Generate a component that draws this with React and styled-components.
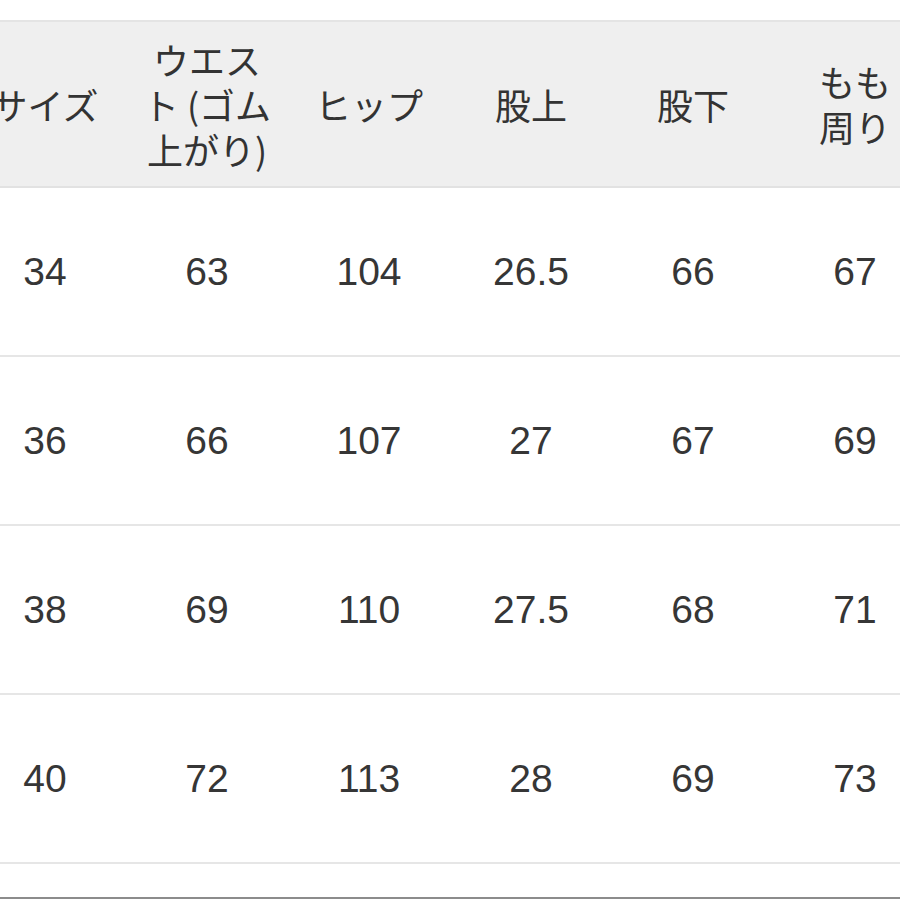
import styled, { createGlobalStyle } from "styled-components";

const GlobalStyle = createGlobalStyle`
  html, body {
    margin: 0;
    padding: 0;
    background: #ffffff;
    overflow: hidden;
  }
`;

const Page = styled.div`
  width: 900px;
  height: 900px;
  overflow: hidden;
  padding-top: 20px;
  box-sizing: border-box;
`;

const Table = styled.table`
  width: 972px;
  margin-left: -36px;
  border-collapse: collapse;
  table-layout: fixed;
  border-top: 2px solid #e4e4e4;
`;

const HeadRow = styled.tr`
  background: #efefef;
  height: 166px;
  border-bottom: 2px solid #e2e2e2;
`;

const HeadCell = styled.th`
  font-family: "Noto Sans CJK JP", "Liberation Sans", sans-serif;
  font-size: 36px;
  font-weight: 400;
  line-height: 45px;
  color: #333333;
  text-align: center;
  vertical-align: middle;
  padding: 0;
  white-space: nowrap;
`;

const BodyRow = styled.tr`
  height: 169px;
  border-bottom: 2px solid #e6e6e6;
`;

const Cell = styled.td`
  font-family: "Liberation Sans", Arial, sans-serif;
  font-size: 39px;
  color: #363636;
  text-align: center;
  vertical-align: middle;
  padding: 0;
`;

const BottomEdge = styled.div`
  margin-top: 33px;
  border-top: 2px solid #8c8c8c;
`;

const headers = [
  ["サイズ"],
  ["ウエス", "ト (ゴム", "上がり)"],
  ["ヒップ"],
  ["股上"],
  ["股下"],
  ["もも", "周り"],
];

const rows = [
  ["34", "63", "104", "26.5", "66", "67"],
  ["36", "66", "107", "27", "67", "69"],
  ["38", "69", "110", "27.5", "68", "71"],
  ["40", "72", "113", "28", "69", "73"],
];

export default function App() {
  return (
    <>
      <GlobalStyle />
      <Page>
        <Table>
          <thead>
            <HeadRow>
              {headers.map((lines, i) => (
                <HeadCell key={i}>
                  {lines.map((line, j) => (
                    <span key={j}>
                      {j > 0 && <br />}
                      {line}
                    </span>
                  ))}
                </HeadCell>
              ))}
            </HeadRow>
          </thead>
          <tbody>
            {rows.map((row, i) => (
              <BodyRow key={i}>
                {row.map((v, j) => (
                  <Cell key={j}>{v}</Cell>
                ))}
              </BodyRow>
            ))}
          </tbody>
        </Table>
        <BottomEdge />
      </Page>
    </>
  );
}
